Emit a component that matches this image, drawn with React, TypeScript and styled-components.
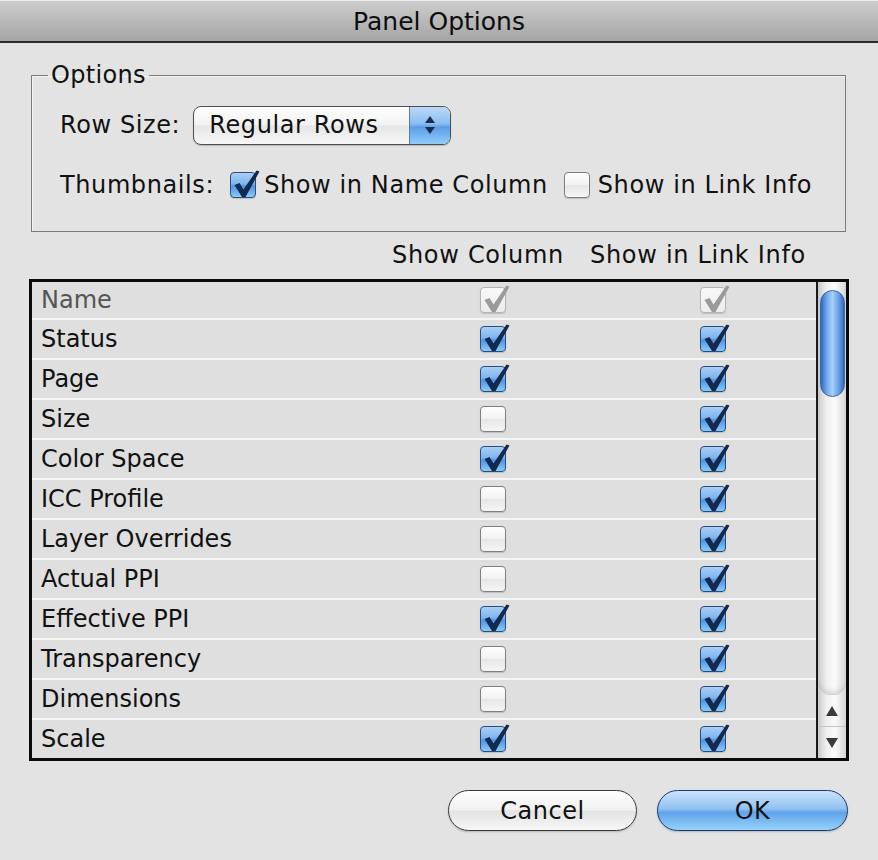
import styled, { createGlobalStyle } from 'styled-components';

const GlobalStyle = createGlobalStyle`
  html, body {
    margin: 0;
    padding: 0;
    background: #e3e3e3;
  }
  body {
    font-family: "DejaVu Sans", "Liberation Sans", sans-serif;
    color: #111;
  }
`;

interface ColumnItem {
  name: string;
  showColumn: boolean;
  showInfo: boolean;
  disabled?: boolean;
}

const columns: ColumnItem[] = [
  { name: 'Name', showColumn: true, showInfo: true, disabled: true },
  { name: 'Status', showColumn: true, showInfo: true },
  { name: 'Page', showColumn: true, showInfo: true },
  { name: 'Size', showColumn: false, showInfo: true },
  { name: 'Color Space', showColumn: true, showInfo: true },
  { name: 'ICC Profile', showColumn: false, showInfo: true },
  { name: 'Layer Overrides', showColumn: false, showInfo: true },
  { name: 'Actual PPI', showColumn: false, showInfo: true },
  { name: 'Effective PPI', showColumn: true, showInfo: true },
  { name: 'Transparency', showColumn: false, showInfo: true },
  { name: 'Dimensions', showColumn: false, showInfo: true },
  { name: 'Scale', showColumn: true, showInfo: true },
];

const AquaCheckbox = ({
  checked,
  disabled,
}: {
  checked: boolean;
  disabled?: boolean;
}) => (
  <Box $checked={checked && !disabled} $disabled={disabled}>
    {checked && (
      <svg width="30" height="30" viewBox="0 0 30 30">
        <path
          d="M3.5 12 L8.5 10 L12.5 16.5 L25.5 -2.5 L28.5 -1.5 L14.5 24 L11 24 Z"
          fill={disabled ? '#9a9a9a' : '#13294d'}
        />
      </svg>
    )}
  </Box>
);

export default function App() {
  return (
    <>
      <GlobalStyle />
      <Window>
        <TitleBar>Panel Options</TitleBar>

        <Content>
          <Options>
            <legend>Options</legend>

            <OptionRow>
              <span>Row Size:</span>
              <Popup>
                <span className="value">Regular Rows</span>
                <span className="stepper">
                  <svg width="12" height="20" viewBox="0 0 12 20">
                    <path d="M6 1 L11 8 L1 8 Z" fill="#1b2d4d" />
                    <path d="M6 19 L11 12 L1 12 Z" fill="#1b2d4d" />
                  </svg>
                </span>
              </Popup>
            </OptionRow>

            <OptionRow>
              <span>Thumbnails:</span>
              <CheckLabel $first>
                <AquaCheckbox checked />
                <span>Show in Name Column</span>
              </CheckLabel>
              <CheckLabel>
                <AquaCheckbox checked={false} />
                <span>Show in Link Info</span>
              </CheckLabel>
            </OptionRow>
          </Options>

          <Headers>
            <span>Show Column</span>
            <span>Show in Link Info</span>
          </Headers>

          <Table>
            <List>
              {columns.map((item) => (
                <Row key={item.name} $disabled={item.disabled}>
                  <span>{item.name}</span>
                  <AquaCheckbox
                    checked={item.showColumn}
                    disabled={item.disabled}
                  />
                  <AquaCheckbox
                    checked={item.showInfo}
                    disabled={item.disabled}
                  />
                </Row>
              ))}
            </List>

            <ScrollBar>
              <div className="track">
                <div className="thumb" />
              </div>
              <div className="arrow">
                <svg width="14" height="12" viewBox="0 0 14 12">
                  <path d="M7 1 L13 11 L1 11 Z" fill="#3a3a3a" />
                </svg>
              </div>
              <div className="arrow">
                <svg width="14" height="12" viewBox="0 0 14 12">
                  <path d="M7 11 L13 1 L1 1 Z" fill="#3a3a3a" />
                </svg>
              </div>
            </ScrollBar>
          </Table>

          <Footer>
            <Button>Cancel</Button>
            <Button $primary>OK</Button>
          </Footer>
        </Content>
      </Window>
    </>
  );
}

const Window = styled.div`
  width: 878px;
  height: 860px;
  display: flex;
  flex-direction: column;
  background: #e3e3e3;
  box-sizing: border-box;
`;

const TitleBar = styled.div`
  height: 43px;
  flex-shrink: 0;
  box-sizing: border-box;
  border-top: 1px solid #ececec;
  border-bottom: 2px solid #2b2b2b;
  background: linear-gradient(#cdcdcd, #a4a4a4);
  display: flex;
  align-items: center;
  justify-content: center;
  font-size: 25px;
  color: #0d0d0d;
`;

const Content = styled.div`
  flex: 1;
  display: flex;
  flex-direction: column;
  padding: 0 29px 29px;
`;

const Options = styled.fieldset`
  margin: 18px 3px 0 2px;
  padding: 0 16px 26px 16px;
  border: 1.5px solid #7b7b7b;
  box-shadow: inset 1px 1px 0 #f4f4f4;
  letter-spacing: 0.6px;

  legend {
    padding: 0 3px;
    font-size: 24px;
    line-height: 28px;
    letter-spacing: 0.3px;
  }
`;

const OptionRow = styled.div`
  display: flex;
  align-items: center;
  height: 40px;
  padding-left: 12px;
  font-size: 24px;
  margin-top: 16px;

  & + & {
    margin-top: 20px;
  }
`;

const Popup = styled.div`
  margin-left: 13px;
  width: 258px;
  height: 39px;
  box-sizing: border-box;
  display: flex;
  border: 1px solid #4f4f4f;
  border-radius: 8px;
  background: linear-gradient(#ffffff, #f2f2f2 48%, #e6e6e6 52%, #f7f7f7);
  box-shadow: 0 1px 1px rgba(0, 0, 0, 0.2);

  .value {
    flex: 1;
    display: flex;
    align-items: center;
    padding-left: 15px;
  }

  .stepper {
    width: 40px;
    display: flex;
    align-items: center;
    justify-content: center;
    border-left: 1px solid #5b7aa8;
    border-radius: 0 7px 7px 0;
    background: linear-gradient(#bcd9f8, #8bbdf1 45%, #5c9de8 55%, #93cdf8);
  }
`;

const CheckLabel = styled.label<{ $first?: boolean }>`
  display: flex;
  align-items: center;
  gap: 8px;
  margin-left: ${(p) => (p.$first ? '16px' : '16px')};
`;

const Box = styled.span<{ $checked: boolean; $disabled?: boolean }>`
  position: relative;
  display: inline-block;
  width: 26px;
  height: 26px;
  box-sizing: border-box;
  border-radius: 4px;
  border: 1px solid
    ${(p) => (p.$checked ? '#2c4c7c' : p.$disabled ? '#b4b4b4' : '#7f7f7f')};
  background: ${(p) =>
    p.$checked
      ? 'linear-gradient(#a9cff7, #7db5ef 45%, #4f94e4 55%, #86cbfb)'
      : p.$disabled
      ? 'linear-gradient(#f8f8f8, #ececec)'
      : 'linear-gradient(#ffffff, #f1f1f1 50%, #e6e6e6 52%, #f6f6f6)'};
  box-shadow: 0 1px 1px rgba(0, 0, 0, 0.15);
  flex-shrink: 0;

  svg {
    position: absolute;
    left: 0;
    top: 0;
    overflow: visible;
  }
`;

const Headers = styled.div`
  margin-top: 9px;
  height: 28px;
  display: flex;
  justify-content: flex-end;
  align-items: center;
  gap: 26px;
  padding-right: 43px;
  font-size: 24px;
  letter-spacing: 0.7px;
`;

const Table = styled.div`
  margin-top: 10px;
  display: flex;
  border: 3px solid #0a0a0a;
  background: #dfdfdf;
`;

const List = styled.div`
  flex: 1;
  height: 476px;
  overflow: hidden;
  display: flex;
  flex-direction: column;
`;

const Row = styled.div<{ $disabled?: boolean }>`
  flex-shrink: 0;
  height: 40px;
  box-sizing: border-box;
  border-bottom: 2px solid #f6f6f6;
  display: grid;
  grid-template-columns: 1fr 220px 116px;
  align-items: center;
  padding-left: 9px;
  font-size: 24px;
  color: ${(p) => (p.$disabled ? '#555' : '#111')};

  &:first-child {
    height: 38px;
  }
`;

const ScrollBar = styled.div`
  width: 28px;
  border-left: 2px solid #1a1a1a;
  display: flex;
  flex-direction: column;
  background: linear-gradient(to right, #c9c9c9, #efefef 30%, #fbfbfb 60%, #d6d6d6);

  .track {
    flex: 1;
    padding: 8px 1px 0 2px;
    border-bottom: 1px solid #cfcfcf;
    border-radius: 0 0 12px 12px;
    box-shadow: inset 0 -6px 6px -4px rgba(0, 0, 0, 0.15);
  }

  .thumb {
    height: 107px;
    box-sizing: border-box;
    border-radius: 13px;
    border: 1px solid #3a64a3;
    background: linear-gradient(
      to right,
      #2d6bc3,
      #7bb2ef 30%,
      #a8d0fa 50%,
      #5f9ae5 80%,
      #2c68be
    );
  }

  .arrow {
    height: 31px;
    display: flex;
    align-items: center;
    justify-content: center;
  }

  .arrow + .arrow {
    border-top: 1px solid #c4c4c4;
  }
`;

const Footer = styled.div`
  margin-top: 29px;
  display: flex;
  justify-content: flex-end;
  gap: 20px;
  padding-right: 1px;
`;

const Button = styled.button<{ $primary?: boolean }>`
  width: ${(p) => (p.$primary ? '191px' : '189px')};
  height: 41px;
  border-radius: 21px;
  font-family: inherit;
  font-size: 24px;
  letter-spacing: 0.5px;
  color: #111;
  border: 1.5px solid ${(p) => (p.$primary ? '#1c3b6c' : '#3a3a3a')};
  background: ${(p) =>
    p.$primary
      ? 'linear-gradient(#cbe3fb, #92c2f3 45%, #62a3ea 55%, #94d3fb)'
      : 'linear-gradient(#fefefe, #f1f1f1 48%, #e3e3e3 52%, #f7f7f7)'};
  box-shadow: 0 1px 2px rgba(0, 0, 0, 0.2);
  padding: 0;
`;
